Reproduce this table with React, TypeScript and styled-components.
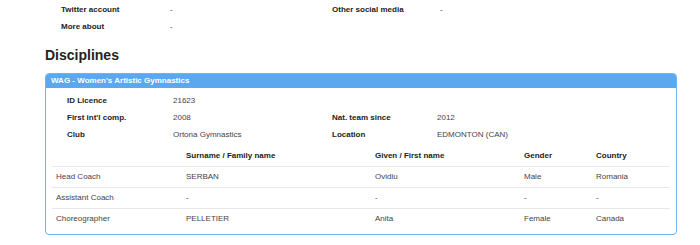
import styled, { createGlobalStyle } from "styled-components";

const GlobalStyle = createGlobalStyle`
  body {
    margin: 0;
    background: #ffffff;
    font-family: "Liberation Sans", Arial, Helvetica, sans-serif;
    color: #333333;
  }
`;

const Page = styled.div`
  width: 700px;
  height: 245px;
  overflow: hidden;
  padding-top: 0.5px;
`;

const InfoGrid = styled.div<{ $indent: number; $cols: string }>`
  display: grid;
  grid-template-columns: ${(p) => p.$cols};
  grid-auto-rows: 17px;
  padding-left: ${(p) => p.$indent}px;
  font-size: 8px;
  align-items: center;
`;

const Label = styled.div`
  font-weight: bold;
  color: #222222;
`;

const Value = styled.div`
  color: #444444;
`;

const Heading = styled.h2`
  margin: 12px 0 10px 45px;
  font-size: 14px;
  line-height: 16px;
  font-weight: bold;
  color: #222222;
`;

const Panel = styled.div`
  margin: 0 23px 0 45px;
  border: 1px solid #6db4f6;
  border-radius: 4px;
  overflow: hidden;
  padding-bottom: 5px;
`;

const PanelHeader = styled.div`
  background: #5ba7f0;
  color: #ffffff;
  font-size: 8px;
  font-weight: bold;
  height: 14px;
  line-height: 14px;
  padding-left: 5px;
`;

const PanelBody = styled.div`
  padding-top: 4.5px;
`;

const Table = styled.table`
  border-collapse: collapse;
  margin: 2px 6px 0 6px;
  width: calc(100% - 12px);
  font-size: 8px;
  table-layout: fixed;
`;

const Th = styled.th<{ $w?: number }>`
  box-sizing: border-box;
  text-align: left;
  font-weight: bold;
  color: #222222;
  height: 21px;
  padding: 0 0 0 4px;
  width: ${(p) => (p.$w ? `${p.$w}px` : "auto")};
`;

const Row = styled.tr`
  border-top: 1px solid #e8e8e8;
`;

const Td = styled.td`
  color: #444444;
  height: 20px;
  padding: 0 0 0 4px;
`;

const contact = [
  ["Twitter account", "-", "Other social media", "-"],
  ["More about", "-", "", ""],
];

const licence = [
  ["ID Licence", "21623", "", ""],
  ["First int'l comp.", "2008", "Nat. team since", "2012"],
  ["Club", "Ortona Gymnastics", "Location", "EDMONTON (CAN)"],
];

const staff = [
  ["Head Coach", "SERBAN", "Ovidiu", "Male", "Romania"],
  ["Assistant Coach", "-", "-", "-", "-"],
  ["Choreographer", "PELLETIER", "Anita", "Female", "Canada"],
];

function InfoRows({ rows }: { rows: string[][] }) {
  return (
    <>
      {rows.map((r) => [
        <Label key={r[0]}>{r[0]}</Label>,
        <Value key={r[0] + "v"}>{r[1]}</Value>,
        <Label key={r[0] + "l2"}>{r[2]}</Label>,
        <Value key={r[0] + "v2"}>{r[3]}</Value>,
      ])}
    </>
  );
}

function App() {
  return (
    <>
      <GlobalStyle />
      <Page>
        <InfoGrid $indent={61} $cols="109px 162px 108px 1fr">
          <InfoRows rows={contact} />
        </InfoGrid>

        <Heading>Disciplines</Heading>

        <Panel>
          <PanelHeader>WAG - Women's Artistic Gymnastics</PanelHeader>
          <PanelBody>
            <InfoGrid $indent={21} $cols="106px 159px 105px 1fr">
              <InfoRows rows={licence} />
            </InfoGrid>
            <Table>
              <thead>
                <tr>
                  <Th $w={130}></Th>
                  <Th $w={189}>Surname / Family name</Th>
                  <Th $w={149}>Given / First name</Th>
                  <Th $w={72}>Gender</Th>
                  <Th>Country</Th>
                </tr>
              </thead>
              <tbody>
                {staff.map((s) => (
                  <Row key={s[0]}>
                    {s.map((c, i) => (
                      <Td key={i}>{c}</Td>
                    ))}
                  </Row>
                ))}
              </tbody>
            </Table>
          </PanelBody>
        </Panel>
      </Page>
    </>
  );
}

export default App;
